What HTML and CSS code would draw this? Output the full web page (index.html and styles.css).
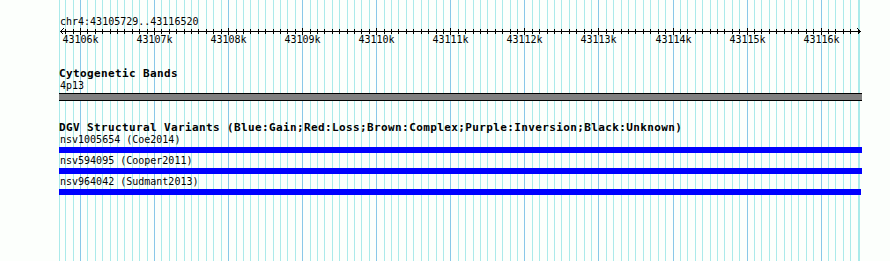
FILE: index.html
```html
<!DOCTYPE html>
<html>
<head>
	<title>GBrowse - chr4:43105729..43116520</title>
	<link rel="stylesheet" href="styles.css">
</head>
<body>

	<div class="panel">
		<svg class="grid" id="grid" width="890" height="261"></svg>

		<div class="ruler-track">
			<div class="ruler-title">chr4:43105729..43116520</div>
			<svg class="ruler" id="ruler" width="890" height="7"></svg>
			<div class="ruler-labels" id="ruler_labels"></div>
		</div>

		<div class="track cyto">
			<div class="track-title">Cytogenetic Bands</div>
			<div class="feature-label">4p13</div>
			<div class="band"></div>
		</div>

		<div class="track dgv">
			<div class="track-title">DGV Structural Variants (Blue:Gain;Red:Loss;Brown:Complex;Purple:Inversion;Black:Unknown)</div>
			<div class="feature">
				<div class="feature-label">nsv1005654 (Coe2014)</div>
				<div class="bar"></div>
			</div>
			<div class="feature">
				<div class="feature-label">nsv594095 (Cooper2011)</div>
				<div class="bar"></div>
			</div>
			<div class="feature">
				<div class="feature-label">nsv964042 (Sudmant2013)</div>
				<div class="bar bar-short"></div>
			</div>
		</div>
	</div>

	<script src="script.js"></script>
</body>
</html>
```

FILE: styles.css
```css
body {
	background-color: #FCFFFC;
	margin: 0;
}

.panel {
	height: 261px;
	overflow: hidden;
	position: relative;
	width: 890px;
}

.grid {
	left: 0;
	position: absolute;
	shape-rendering: crispEdges;
	top: 0;
}

.grid .minor {
	fill: #AAEAEA;
}

.grid .major {
	fill: #88C8E8;
}

.ruler-track,
.track {
	position: relative;
}

.ruler-track {
	padding-top: 15px;
}

.ruler-title,
.feature-label,
.ruler-labels {
	color: #000000;
	font-family: "DejaVu Sans Mono", "Liberation Mono", monospace;
	font-size: 10px;
	line-height: 13px;
}

.ruler-title {
	margin-left: 60px;
}

.ruler {
	display: block;
	shape-rendering: crispEdges;
}

.ruler-labels {
	height: 11px;
	line-height: 11px;
	margin-top: -1px;
	position: relative;
}

.tick-label {
	position: absolute;
	top: 0;
	transform: translateX(-50%);
	white-space: nowrap;
}

.track-title {
	color: #000000;
	font-family: "DejaVu Sans Mono", "Liberation Mono", monospace;
	font-size: 11px;
	font-weight: bold;
	letter-spacing: 0.38px;
	line-height: 12px;
	margin-left: 59px;
	white-space: nowrap;
}

.feature-label {
	line-height: 12px;
	margin-left: 60px;
}

.cyto {
	margin-top: 23px;
}

.band {
	background-color: #808080;
	border-bottom: 1px solid #000000;
	border-top: 1px solid #000000;
	height: 6px;
	margin-left: 59px;
	margin-top: 1px;
	width: 803px;
}

.dgv {
	margin-top: 21px;
}

.feature {
	margin-bottom: 2px;
}

.bar {
	background-color: #0000FF;
	height: 6px;
	margin-left: 59px;
	margin-top: 1px;
	width: 803px;
}

.bar-short {
	width: 802px;
}
```

FILE: script.js
```js
var START = 43105729;
var END = 43116520;
var ORIGIN = 59.9;
var SCALE = 0.07407; // pixels per base
var SVG_NS = 'http://www.w3.org/2000/svg';

function toX(bp) {
	return Math.round(ORIGIN + (bp - START) * SCALE);
}

function addRect(svg, x, y, w, h, cls, fill) {
	const rect = document.createElementNS(SVG_NS, 'rect');
	rect.setAttribute('x', x);
	rect.setAttribute('y', y);
	rect.setAttribute('width', w);
	rect.setAttribute('height', h);
	if (cls) rect.setAttribute('class', cls);
	if (fill) rect.setAttribute('fill', fill);
	svg.appendChild(rect);
}

function addArrow(svg, points) {
	const line = document.createElementNS(SVG_NS, 'polyline');
	line.setAttribute('points', points);
	line.setAttribute('fill', 'none');
	line.setAttribute('stroke', '#000000');
	line.setAttribute('stroke-width', '1');
	svg.appendChild(line);
}

const grid = document.getElementById('grid');
const ruler = document.getElementById('ruler');
const labels = document.getElementById('ruler_labels');

// Grid edges
addRect(grid, 59, 0, 1, 261, 'minor');
addRect(grid, toX(END), 0, 1, 261, 'minor');

// Ruler base line and arrow heads
addRect(ruler, 60, 3, 801, 1, null, '#000000');
addArrow(ruler, '63.5,0.5 60.5,3.5 63.5,6.5');
addArrow(ruler, '857.5,0.5 860.5,3.5 857.5,6.5');

// One grid line and one tick every 100 bp, a label every kb
for (let bp = Math.ceil(START / 100) * 100; bp < END; bp += 100) {
	const x = toX(bp);
	const isMajor = bp % 1000 === 0;

	addRect(grid, x, 0, 1, 261, isMajor ? 'major' : 'minor');

	if (isMajor) {
		addRect(ruler, x, 0, 1, 7, null, '#000000');
		const label = document.createElement('span');
		label.className = 'tick-label';
		label.style.left = x + 0.5 + 'px';
		label.innerText = (bp / 1000) + 'k';
		labels.appendChild(label);
	} else {
		addRect(ruler, x, 1, 1, 5, null, '#000000');
	}
}
```
